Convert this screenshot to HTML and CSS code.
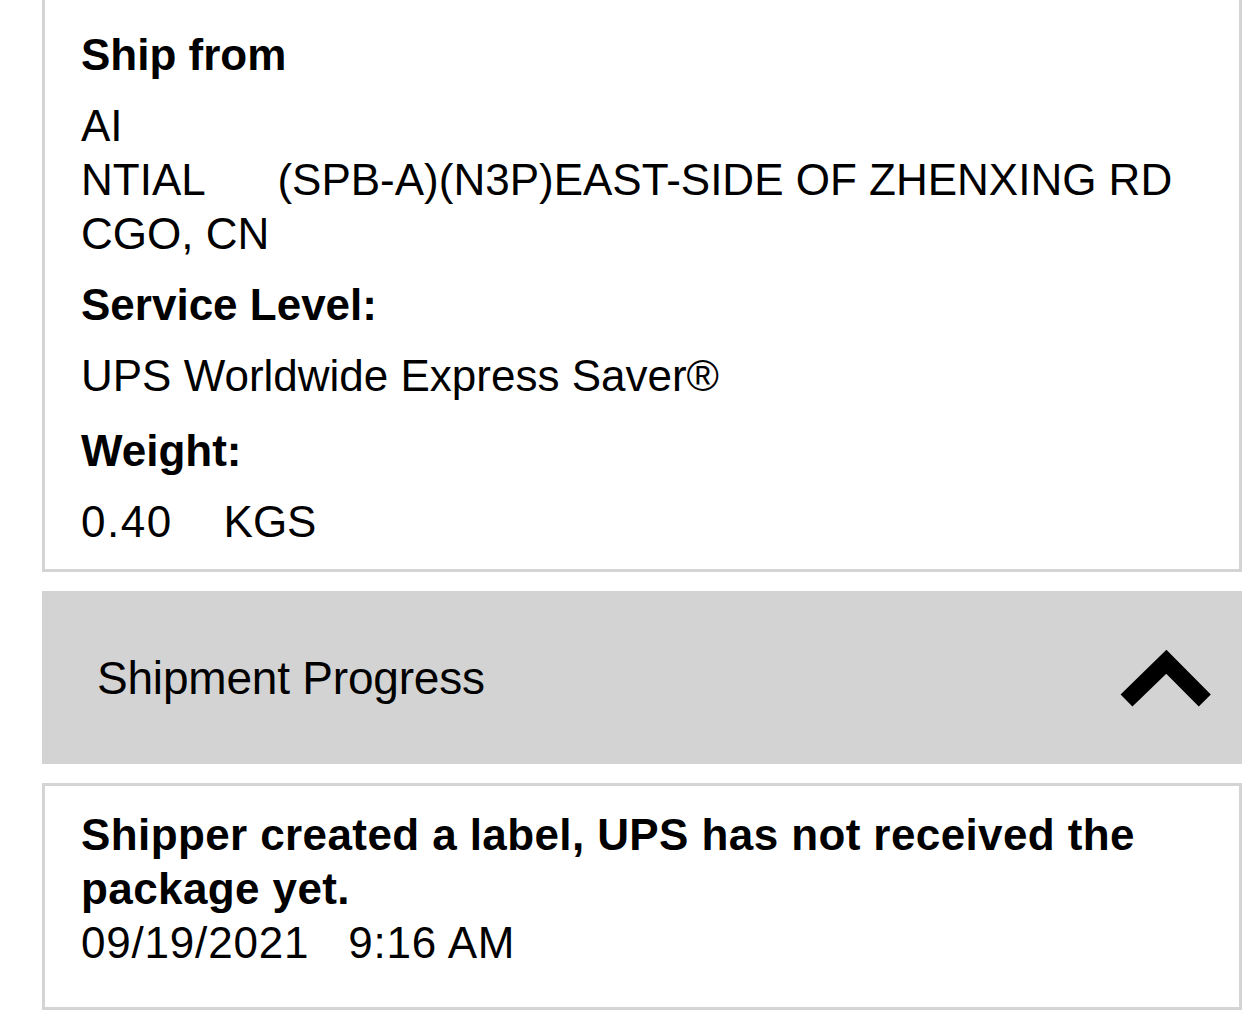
FILE: index.html
```html
<!DOCTYPE html>
<html lang="en">
<head>
<meta charset="utf-8">
<title>Shipment details</title>
<link rel="stylesheet" href="styles.css">
</head>
<body>
<main class="page">
  <section class="card card--cut">
    <h3 class="label">Ship from</h3>
    <div class="value address">
      <div>AI</div>
      <div class="pre">NTIAL      (SPB-A)(N3P)EAST-SIDE OF ZHENXING RD</div>
      <div>CGO, CN</div>
    </div>
    <h3 class="label">Service Level:</h3>
    <div class="value value--wide">UPS Worldwide Express Saver®</div>
    <h3 class="label">Weight:</h3>
    <div class="value value--last pre"><span class="num">0.40</span>    KGS</div>
  </section>

  <button class="accordion" type="button">
    <span class="accordion-title">Shipment Progress</span>
    <svg class="chevron" width="100" height="66" viewBox="0 0 100 66" aria-hidden="true">
      <path d="M10.5 55.5 L50.3 16.8 L88.8 55.5" fill="none" stroke="#000" stroke-width="17" stroke-linecap="butt" stroke-linejoin="miter"/>
    </svg>
  </button>

  <section class="card card--event">
    <div class="event-title">Shipper created a label, UPS has not received the package yet.</div>
    <div class="event-time pre">09/19/2021   9:16 AM</div>
  </section>
</main>
</body>
</html>
```

FILE: styles.css
```css
html, body {
  margin: 0;
  padding: 0;
  background: #ffffff;
}

body {
  font-family: "Liberation Sans", Arial, Helvetica, sans-serif;
  font-size: 44px;
  line-height: 54px;
  color: #000000;
}

.page {
  width: 1200px;
  margin: 0 14px 0 42px;
  display: flex;
  flex-direction: column;
  gap: 19px;
}

.card {
  box-sizing: border-box;
  border: 3px solid #d4d4d4;
  background: #ffffff;
  padding: 28px 36px 20px 36px;
}

.card--cut {
  border-top-width: 0;
}

.label {
  margin: 0 0 17px 0;
  font-size: 44px;
  line-height: 54px;
  font-weight: 700;
}

.value {
  margin: 0 0 17px 0;
}

.value--wide {
  margin-bottom: 21px;
}

.value--last {
  margin-bottom: 0;
}

.num {
  letter-spacing: 1.5px;
  margin-right: 2px;
}

.pre {
  white-space: pre;
}

.accordion {
  box-sizing: border-box;
  height: 173px;
  width: 100%;
  margin: 0;
  border: 0;
  background: #d3d3d3;
  padding: 0 26px 0 55px;
  display: flex;
  align-items: center;
  justify-content: space-between;
  font-family: inherit;
  color: #000000;
  cursor: pointer;
}

.accordion-title {
  font-size: 46px;
  line-height: 54px;
  font-weight: 400;
  letter-spacing: -0.2px;
}

.chevron {
  display: block;
  flex: none;
}

.card--event {
  padding: 22px 36px 37px 36px;
}

.event-title {
  font-weight: 700;
  letter-spacing: 0.4px;
}

.event-time {
  letter-spacing: 0.8px;
}
```
